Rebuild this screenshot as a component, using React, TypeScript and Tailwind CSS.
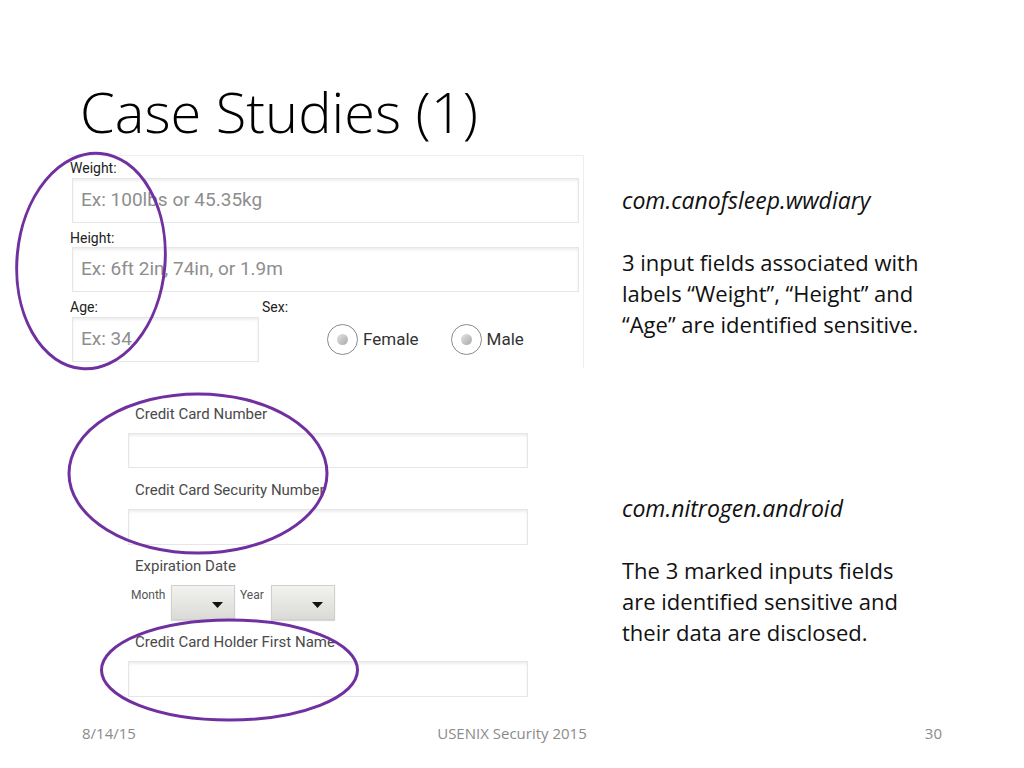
import React from "react";

const slideFont = { fontFamily: '"Open Sans", "Liberation Sans", sans-serif' };
const droidFont = { fontFamily: 'Roboto, "Open Sans", sans-serif' };

const inputCls =
  "bg-white border border-[#e6e6e6] shadow-[inset_0_2px_3px_rgba(0,0,0,0.07)]";

const Radio = ({ label }: { label: string }) => (
  <div className="flex items-center gap-[5px]">
    <div className="w-[31px] h-[31px] rounded-full border-[1.5px] border-[#8a8a8a] bg-white flex items-center justify-center">
      <div className="w-[11px] h-[11px] rounded-full bg-gradient-to-br from-[#e4e4e4] to-[#a9a9a9]" />
    </div>
    <span className="text-[17px] text-[#333]">{label}</span>
  </div>
);

const Dropdown = () => (
  <div className="relative w-[64px] h-[35px] bg-gradient-to-b from-[#f2f2f0] to-[#dadad6] border border-[#d0d0cc] shadow-[0_1px_1px_rgba(0,0,0,0.15)]">
    <svg
      className="absolute right-[11px] top-[16px]"
      width="11"
      height="6"
      viewBox="0 0 11 6"
    >
      <polygon points="0,0 11,0 5.5,6" fill="#111" />
    </svg>
  </div>
);

const WeightForm = () => (
  <div
    className="ml-[67px] w-[517px] h-[213px] bg-white border-t border-r border-[#eeeeee] pl-[5px] pr-[4px]"
    style={droidFont}
  >
    <div className="h-[22px] pt-[4px] leading-[16px] text-[14px] text-[#222] -ml-[2px]">
      Weight:
    </div>
    <div className={`h-[45px] ${inputCls} flex items-center pl-[8px]`}>
      <span className="text-[19px] text-[#8e8e8e]">Ex: 100lbs or 45.35kg</span>
    </div>
    <div className="h-[24px] pt-[7px] leading-[16px] text-[14px] text-[#222] -ml-[2px]">
      Height:
    </div>
    <div className={`h-[45px] ${inputCls} flex items-center pl-[8px]`}>
      <span className="text-[19px] text-[#8e8e8e]">
        Ex: 6ft 2in, 74in, or 1.9m
      </span>
    </div>
    <div className="flex">
      <div className="w-[187px]">
        <div className="h-[25px] pt-[7px] leading-[16px] text-[14px] text-[#222] -ml-[2px]">
          Age:
        </div>
        <div className={`h-[45px] ${inputCls} flex items-center pl-[8px]`}>
          <span className="text-[19px] text-[#8e8e8e]">Ex: 34</span>
        </div>
      </div>
      <div className="flex-1 pl-[3px]">
        <div className="h-[25px] pt-[7px] leading-[16px] text-[14px] text-[#222]">
          Sex:
        </div>
        <div className="h-[45px] flex items-center pl-[65px] gap-[32px]">
          <Radio label="Female" />
          <Radio label="Male" />
        </div>
      </div>
    </div>
  </div>
);

const CardForm = () => (
  <div className="ml-[128px] w-[400px] mt-[34px]" style={droidFont}>
    <div className="h-[24px] leading-[24px] pl-[7px] text-[15px] text-[#4a4a4a]">
      Credit Card Number
    </div>
    <div className={`mt-[7px] h-[35px] ${inputCls}`} />
    <div className="mt-[10px] h-[24px] leading-[24px] pl-[7px] text-[15px] text-[#4a4a4a]">
      Credit Card Security Number
    </div>
    <div className={`mt-[7px] h-[36px] ${inputCls}`} />
    <div className="mt-[9px] h-[24px] leading-[24px] pl-[7px] text-[15px] text-[#4a4a4a]">
      Expiration Date
    </div>
    <div className="mt-[7px] h-[35px] flex items-start ml-[3px]">
      <span className="text-[12px] leading-[20px] text-[#555] w-[40px]">Month</span>
      <Dropdown />
      <span className="text-[12px] leading-[20px] text-[#555] w-[36px] pl-[5px]">
        Year
      </span>
      <Dropdown />
    </div>
    <div className="mt-[10px] h-[24px] leading-[24px] pl-[7px] text-[15px] text-[#4a4a4a]">
      Credit Card Holder First Name
    </div>
    <div className={`mt-[7px] h-[36px] ${inputCls}`} />
  </div>
);

const Note = ({
  pkg,
  lines,
  className,
}: {
  pkg: string;
  lines: string[];
  className?: string;
}) => (
  <div className={`text-[22px] leading-[31px] text-[#111] ${className ?? ""}`}>
    <div className="italic text-[23px]">{pkg}</div>
    <div className="h-[31px]" />
    {lines.map((l) => (
      <div key={l}>{l}</div>
    ))}
  </div>
);

export default function App() {
  return (
    <div
      className="relative w-[1024px] h-[768px] bg-white overflow-hidden flex flex-col"
      style={slideFont}
    >
      <h1 className="pl-[80px] pt-[83px] text-[56px] font-light leading-none text-black">
        Case Studies (1)
      </h1>

      <div className="flex mt-[16px]">
        <div className="w-[600px]">
          <WeightForm />
          <CardForm />
        </div>
        <div className="pl-[22px] pt-[30px]">
          <Note
            pkg="com.canofsleep.wwdiary"
            lines={[
              "3 input fields associated with",
              "labels \u201cWeight\u201d, \u201cHeight\u201d and",
              "\u201cAge\u201d are identified sensitive.",
            ]}
          />
          <Note
            className="mt-[153px]"
            pkg="com.nitrogen.android"
            lines={[
              "The 3 marked inputs fields",
              "are identified sensitive and",
              "their data are disclosed.",
            ]}
          />
        </div>
      </div>

      <div className="mt-auto mb-[25px] h-[20px] grid grid-cols-3 px-[82px] text-[15px] leading-[20px] text-[#8b8b8b]">
        <span>8/14/15</span>
        <span className="text-center">USENIX Security 2015</span>
        <span className="text-right">30</span>
      </div>

      <svg
        className="absolute inset-0 pointer-events-none"
        width="1024"
        height="768"
        viewBox="0 0 1024 768"
      >
        <g fill="none" stroke="#7030a0" strokeWidth="3">
          <ellipse cx="91" cy="261" rx="74" ry="108" transform="rotate(5 91 261)" />
          <ellipse cx="198" cy="473.5" rx="129" ry="79.5" />
          <ellipse cx="229.5" cy="670" rx="128" ry="50" />
        </g>
      </svg>
    </div>
  );
}
